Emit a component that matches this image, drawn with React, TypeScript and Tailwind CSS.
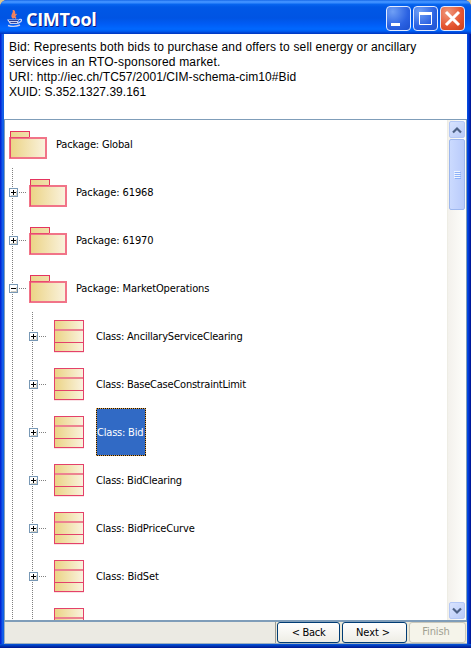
import type { ReactNode } from "react";

type Kind = "package" | "class";
interface Item { label: string; kind: Kind; level: number; open?: boolean; selected?: boolean; spacing: string }

const items: Item[] = [
  { label: "Package: Global", kind: "package", level: 0, spacing: "tracking-[-0.16px]" },
  { label: "Package: 61968", kind: "package", level: 1, spacing: "tracking-[-0.1px]" },
  { label: "Package: 61970", kind: "package", level: 1, spacing: "tracking-[-0.1px]" },
  { label: "Package: MarketOperations", kind: "package", level: 1, open: true, spacing: "tracking-[-0.1px]" },
  { label: "Class: AncillaryServiceClearing", kind: "class", level: 2, spacing: "tracking-[-0.21px]" },
  { label: "Class: BaseCaseConstraintLimit", kind: "class", level: 2, spacing: "tracking-[-0.23px]" },
  { label: "Class: Bid", kind: "class", level: 2, selected: true, spacing: "tracking-[-0.2px]" },
  { label: "Class: BidClearing", kind: "class", level: 2, spacing: "tracking-[-0.2px]" },
  { label: "Class: BidPriceCurve", kind: "class", level: 2, spacing: "tracking-[-0.15px]" },
  { label: "Class: BidSet", kind: "class", level: 2, spacing: "tracking-[-0.15px]" },
  { label: "Class: BilateralTransaction", kind: "class", level: 2, spacing: "tracking-[-0.2px]" },
];

const ui = "font-['DejaVu_Sans_Condensed','DejaVu_Sans',sans-serif] text-[11px]";

function Gutter({ toggle, open }: { toggle?: boolean; open?: boolean }) {
  return (
    <svg width="20" height="48" shapeRendering="crispEdges" className="shrink-0">
      <path d="M3.5 0V48" stroke="#808080" strokeDasharray="1 1" />
      {toggle && (
        <>
          <path d="M10 24.5H17" stroke="#808080" strokeDasharray="1 1" />
          <rect x="0" y="20" width="9" height="9" fill="#7898b5" />
          <rect x="1" y="21" width="7" height="7" fill="#fff" />
          <path d="M2 27.5H8M7.5 23V28" stroke="#d2cec3" />
          <path d={open ? "M2 24.5H7" : "M2 24.5H7M4.5 22V27"} stroke="#000" />
        </>
      )}
    </svg>
  );
}

function Fill() {
  return (
    <defs>
      <linearGradient id="sand" x1="0" x2="1" y1="0" y2="0">
        <stop offset="0" stopColor="#ebd384" />
        <stop offset="1" stopColor="#faf3df" />
      </linearGradient>
      <linearGradient id="sandTab" x1="0" x2="1" y1="0" y2="0">
        <stop offset="0" stopColor="#ebd58c" />
        <stop offset="1" stopColor="#f1e0ac" />
      </linearGradient>
    </defs>
  );
}

function Folder() {
  return (
    <svg width="38" height="28" className="shrink-0">
      <Fill />
      <rect x="1" y="0" width="20" height="7" fill="#e4345f" />
      <rect x="2" y="1" width="18" height="6" fill="url(#sandTab)" />
      <rect x="1" y="7" width="36" height="20" fill="url(#sand)" stroke="#f17488" strokeWidth="2" />
      <path d="M1.5 1V27M2 6.5H20" stroke="#e4305c" strokeOpacity=".6" />
    </svg>
  );
}

function ClassBox() {
  return (
    <svg width="30" height="33" className="ml-[5px] mr-[3px] shrink-0">
      <Fill />
      <rect x=".5" y=".5" width="29" height="31" fill="url(#sand)" stroke="#e4416a" />
      <path d="M1 10H29" stroke="#ed8290" strokeWidth="2" />
      <path d="M1 22.5H29" stroke="#e4416a" />
      <path d="M0 32.5H30" stroke="#f8cdd3" strokeOpacity=".6" />
    </svg>
  );
}

function Row({ item }: { item: Item }) {
  return (
    <div className="flex h-12 shrink-0 items-center">
      {item.level === 2 && <Gutter />}
      {item.level > 0 && <Gutter toggle open={item.open} />}
      <div className="flex w-[47px] shrink-0 items-center">{item.kind === "package" ? <div className="pt-[2px]"><Folder /></div> : <ClassBox />}</div>
      {item.selected ? (
        <div className={`flex h-12 w-[50px] items-center bg-[#316ac5] text-white ${item.spacing}`}>
          <svg width="50" height="48" fill="none" shapeRendering="crispEdges" className="-mr-[50px] shrink-0">
            <rect x=".5" y=".5" width="49" height="47" stroke="#e0a048" />
            <rect x=".5" y=".5" width="49" height="47" stroke="#101010" strokeDasharray="1 1" />
          </svg>
          <span className="whitespace-nowrap pl-px pt-[3px]">{item.label}</span>
        </div>
      ) : (
        <span className={`whitespace-nowrap pt-[3px] ${item.spacing}`}>{item.label}</span>
      )}
    </div>
  );
}

function Caption({ red, children }: { red?: boolean; children: ReactNode }) {
  const tone = red
    ? "bg-[radial-gradient(circle_at_30%_25%,#f09a7e,#e4532f_60%,#c8401c)]"
    : "bg-[radial-gradient(circle_at_25%_20%,#6f9ff5,#2b62e2_60%,#1c50cf)]";
  return (
    <div className={`flex h-[25px] w-[25px] items-center justify-center rounded-[4px] border border-[#e3ebff] ${tone}`}>
      <svg width="23" height="23" fill="none" stroke="#fff">{children}</svg>
    </div>
  );
}

function ScrollButton({ down }: { down?: boolean }) {
  return (
    <div className="flex h-[17px] w-[16px] shrink-0 items-center justify-center rounded-[2px] border border-[#b4c8f6] bg-gradient-to-br from-[#d8e3fe] to-[#b9cbf8]">
      <svg width="10" height="8" fill="none" stroke="#4d6185" strokeWidth="2.2">
        <path d={down ? "M1 1.5L5 5.5L9 1.5" : "M1 6.5L5 2.5L9 6.5"} />
      </svg>
    </div>
  );
}

export default function App() {
  return (
    <div className="flex h-[648px] w-[471px] flex-col overflow-hidden bg-[#dcc68c]">
      <div className="flex h-full flex-col overflow-hidden rounded-t-[7px] bg-[#0831d9]">
        <header className="flex h-[34px] shrink-0 items-center bg-[linear-gradient(to_bottom,#0a5be0_0px,#3f91ff_1px,#3a8eff_3px,#0867f0_4px,#0058e6_7px,#0054e3_18px,#005cf5_24px,#0068ff_29px,#0060f4_31px,#0040cf_33px,#0036bd_34px)] pl-[7px] pr-[6px] pt-[3px]">
          <svg width="16" height="18" fill="none" className="shrink-0">
            <path d="M6.5 8.5C2.5 5.5 7.5 4 6.5 .5C9.5 3.5 5.5 5 7 8M9 8.5C7 6.5 7.5 5.5 9.5 4" stroke="#f5825c" strokeWidth="1.5" />
            <path d="M0 9.5H12L10.5 14H3Z" fill="#c9cfee" />
            <path d="M2 10.5H11M3.5 12.5H10" stroke="#2b3f97" />
            <path d="M12 9.5Q15.5 8.5 14 11.5L10.5 13.5" stroke="#dbe0fa" strokeWidth="1.2" />
            <path d="M1 15.5Q7 17.5 13 15" stroke="#c9cfee" strokeWidth="1.4" />
          </svg>
          <h1 className="ml-[3px] flex-1 font-['Open_Sans','Noto_Sans',sans-serif] text-[18px] font-bold leading-none tracking-[-0.3px] text-white [text-shadow:1px_1px_#0a1883]">CIMTool</h1>
          <div className="flex gap-[2px]">
            <Caption><path d="M4 17.5H13" strokeWidth="3" /></Caption>
            <Caption><path d="M5.5 6V17.5H17.5V6" /><path d="M5 6.5H18" strokeWidth="3" /></Caption>
            <Caption red><path d="M5 5L18 18M18 5L5 18" strokeWidth="3" /></Caption>
          </div>
        </header>
        <div className="min-h-0 flex-1 bg-[linear-gradient(to_right,#0019cf_0px,#0831d9_1px,#166aee_3px,#0855dd_4px,#0855dd_467px,#0041e0_468px,#0030c8_469px,#00138c_471px)] px-1">
          <main className="flex h-[610px] w-[463px] flex-col bg-white">
            <div className="h-[85px] shrink-0 pl-[5px] pt-[6px] font-['Liberation_Sans',Arial,sans-serif] text-[12px] leading-[15px] text-black">
              <p className="whitespace-nowrap tracking-[0.15px]">Bid: Represents both bids to purchase and offers to sell energy or ancillary</p>
              <p className="whitespace-nowrap tracking-[0.18px]">services in an RTO-sponsored market.</p>
              <p className="whitespace-nowrap tracking-[0.09px]">URI: http://iec.ch/TC57/2001/CIM-schema-cim10#Bid</p>
              <p className="whitespace-nowrap tracking-[0.02px]">XUID: S.352.1327.39.161</p>
            </div>
            <div className="flex h-[503px] shrink-0 border-b-2 border-l border-r border-t border-[#7f9db9]">
              <div className={`flex min-w-0 flex-1 flex-col overflow-hidden pl-1 text-black ${ui}`}>
                {items.map((item) => <Row key={item.label} item={item} />)}
              </div>
              <div className="flex w-[19px] flex-col items-center border-l border-[#eeede5] bg-gradient-to-r from-[#f3f1ec] to-[#fefefb] py-px">
                <ScrollButton />
                <div className="mt-px flex h-[71px] w-[16px] shrink-0 items-center justify-center rounded-[2px] border border-[#9db7ee] bg-gradient-to-r from-[#cbdafe] to-[#b9cbfb]">
                  <svg width="7" height="8" shapeRendering="crispEdges">
                    <path d="M0 .5H6M0 2.5H6M0 4.5H6M0 6.5H6" stroke="#eef4fe" />
                    <path d="M1 1.5H7M1 3.5H7M1 5.5H7M1 7.5H7" stroke="#8cb0f8" />
                  </svg>
                </div>
                <div className="flex-1" />
                <ScrollButton down />
              </div>
            </div>
            <footer className={`flex h-[22px] shrink-0 items-stretch border-b border-l border-[#9cb0c0] bg-[#ece9d8] text-black ${ui}`}>
              <div className="w-[271px] border-r border-[#9a9c96] bg-[#ebeae3]" />
              <div className="ml-px flex w-[63px] items-center justify-center rounded-[3px] border border-[#003c74] bg-gradient-to-b from-white to-[#eeede5] pt-px tracking-[-0.3px]">&lt; Back</div>
              <div className="ml-[2px] flex w-[65px] items-center justify-center rounded-[3px] border border-[#003c74] bg-gradient-to-b from-white to-[#eeede5] pr-[3px] pt-px tracking-[-0.1px]">Next &gt;</div>
              <div className="ml-[2px] flex w-[57px] items-center justify-center rounded-[3px] border border-[#c9c7ba] bg-[#f5f4ea] pr-[3px] tracking-[-0.1px] text-[#a1a192]">Finish</div>
            </footer>
          </main>
          <div className="-mx-1 h-1 bg-gradient-to-b from-[#0855dd] to-[#00138c]" />
        </div>
      </div>
    </div>
  );
}
